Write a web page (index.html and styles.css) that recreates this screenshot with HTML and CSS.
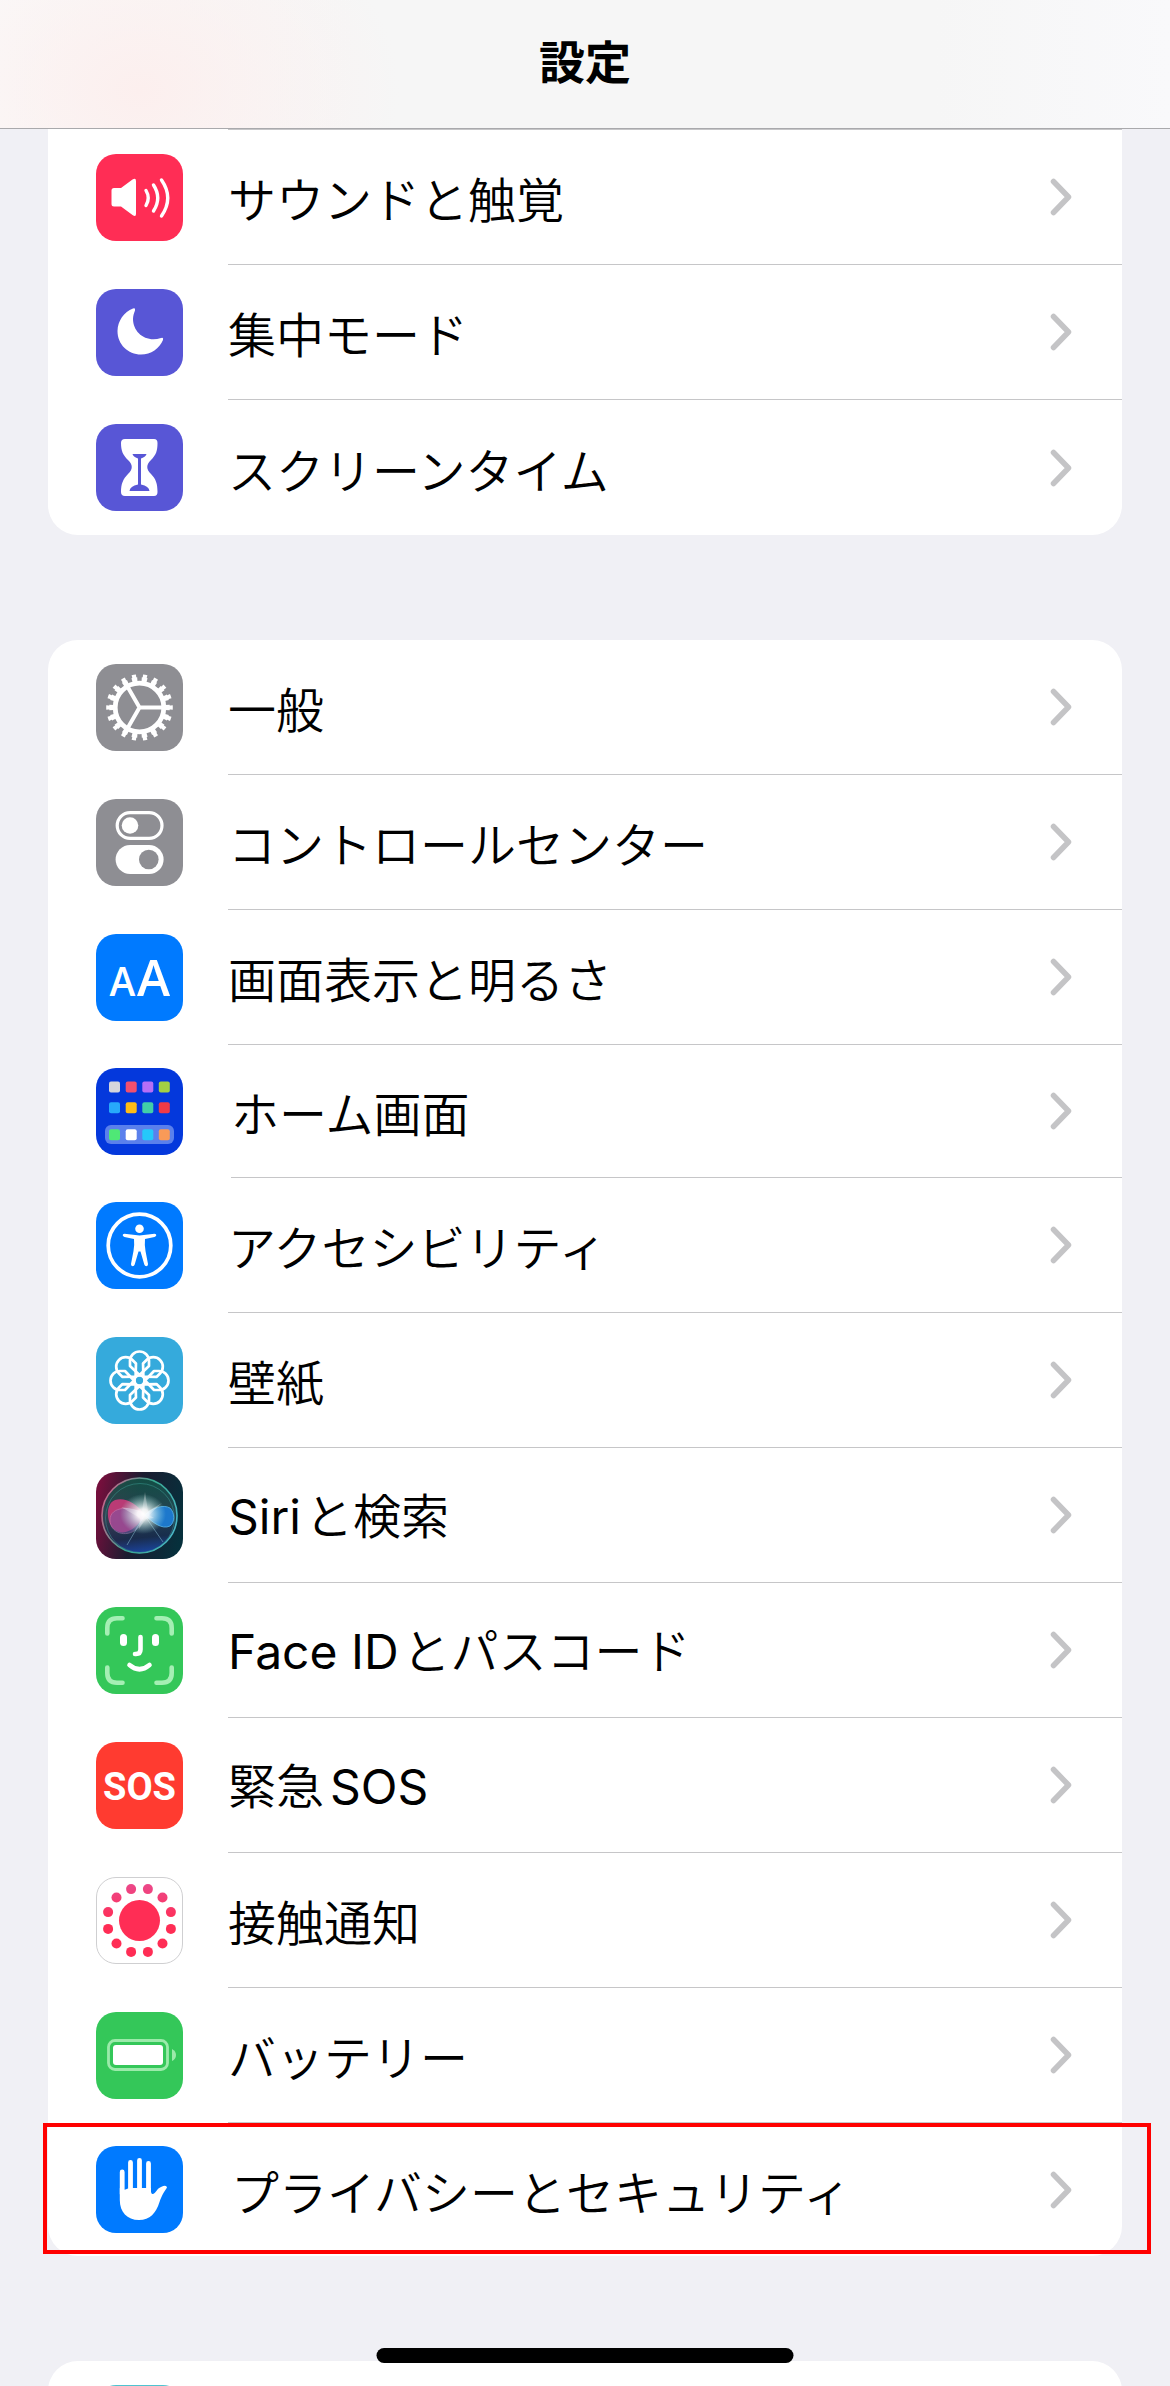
FILE: index.html
```html
<!DOCTYPE html>
<html lang="ja">
<head>
    <meta charset="UTF-8">
    <meta name="viewport" content="width=device-width, initial-scale=1.0">
    <title>設定</title>
    <link rel="stylesheet" href="styles.css">
</head>
<body>
    <svg class="defs" width="0" height="0" aria-hidden="true">
        <symbol id="chevron" viewBox="0 0 22 38">
            <path d="M3.500 3.500L18.500 19L3.500 34.500" fill="none" stroke="#c4c4c6" stroke-width="5.500" stroke-linecap="round" stroke-linejoin="round"/>
        </symbol>
    </svg>

    <header class="navbar">
        <h1>設定</h1>
    </header>

    <main>
        <ul class="group group-first">
            <li class="row-peek"></li>
            <li><a class="row" href="#">
                <svg class="icon" viewBox="0 0 87 87">
                    <rect width="87" height="87" rx="20" fill="#ff2d55"/>
                    <path d="M18 34H25L36.500 25.500Q40 23.500 40 27V60Q40 63.500 36.500 61L25 52.500H18Q15.500 52.500 15.500 50V36.500Q15.500 34 18 34Z" fill="#fff"/>
                    <path d="M50 36.500Q54.500 44 50 51.500M57.500 31Q66 44 57.500 57M65.500 26Q78 44 65.500 62" fill="none" stroke="#fff" stroke-width="3.400" stroke-linecap="round"/>
                </svg>
                <span class="cell"><span class="label">サウンドと触覚</span><svg class="chevron"><use href="#chevron"/></svg></span>
            </a></li>
            <li><a class="row" href="#">
                <svg class="icon" viewBox="0 0 87 87">
                    <rect width="87" height="87" rx="20" fill="#5856d6"/>
                    <path d="M37 19.500C28 23 21.500 32 21.500 42C21.500 55.500 32 65.500 45 65.500C55 65.500 63.500 59.500 67 51Q67.800 48 65 49C50 54 37 43.500 37 30C37 27 38 24 39 21.500Q39.600 18.500 37 19.500Z" fill="#fff"/>
                </svg>
                <span class="cell"><span class="label">集中モード</span><svg class="chevron"><use href="#chevron"/></svg></span>
            </a></li>
            <li><a class="row" href="#">
                <svg class="icon" viewBox="0 0 87 87">
                    <rect width="87" height="87" rx="20" fill="#5856d6"/>
                    <path d="M29 15H58Q61.500 15 61.500 19C61.500 27 60 31 55 36C50 41 50 45 55 50C60 55 61.500 60 61.500 68Q61.500 72 58 72H29Q25 72 25 68C25 60 27 55 32 50C37 45 37 41 32 36C27 31 25 27 25 19Q25 15 29 15Z" fill="#fff"/>
                    <path d="M36.500 30H50.500Q50 32.500 45 34.500V60.500Q53 62 53.500 67H33.500Q34 62 42 60.500V34.500Q37 32.500 36.500 30Z" fill="#5856d6"/>
                </svg>
                <span class="cell"><span class="label">スクリーンタイム</span><svg class="chevron"><use href="#chevron"/></svg></span>
            </a></li>
        </ul>

        <ul class="group">
            <li><a class="row" href="#">
                <svg class="icon" viewBox="0 0 87 87">
                    <rect width="87" height="87" rx="20" fill="#8e8e93"/>
                    <g fill="none" stroke="#fff">
                        <circle cx="43.500" cy="43.500" r="24.300" stroke-width="4.800"/>
                        <circle cx="43.500" cy="43.500" r="27.800" stroke-width="5" pathLength="180" stroke-dasharray="5.500 4.500" stroke-dashoffset="2.750"/>
                        <circle cx="43.500" cy="43.500" r="31" stroke-width="4.600" pathLength="180" stroke-dasharray="3.800 6.200" stroke-dashoffset="1.900"/>
                        <path d="M43.500 43.500H66M43.500 43.500L32 23.600M43.500 43.500L32 63.400" stroke-width="4"/>
                    </g>
                </svg>
                <span class="cell"><span class="label">一般</span><svg class="chevron"><use href="#chevron"/></svg></span>
            </a></li>
            <li><a class="row" href="#">
                <svg class="icon" viewBox="0 0 87 87">
                    <rect width="87" height="87" rx="20" fill="#8e8e93"/>
                    <rect x="21.200" y="13.600" width="44.800" height="25.800" rx="12.900" fill="none" stroke="#fff" stroke-width="3.200"/>
                    <circle cx="34" cy="26.500" r="8.300" fill="#fff"/>
                    <rect x="19.600" y="46" width="48" height="29" rx="14.500" fill="#fff"/>
                    <circle cx="52.800" cy="60.500" r="9.800" fill="#8e8e93"/>
                </svg>
                <span class="cell"><span class="label">コントロールセンター</span><svg class="chevron"><use href="#chevron"/></svg></span>
            </a></li>
            <li><a class="row" href="#">
                <svg class="icon" viewBox="0 0 87 87">
                    <rect width="87" height="87" rx="20" fill="#007aff"/>
                    <text class="icon-aa" x="26.500" y="62" font-size="39" text-anchor="middle">A</text>
                    <text class="icon-aa" x="57.500" y="62" font-size="50" text-anchor="middle">A</text>
                </svg>
                <span class="cell"><span class="label">画面表示と明るさ</span><svg class="chevron"><use href="#chevron"/></svg></span>
            </a></li>
            <li><a class="row row-compact" href="#">
                <svg class="icon" viewBox="0 0 87 87">
                    <rect width="87" height="87" rx="20" fill="#0438dc"/>
                    <rect x="9" y="57" width="69" height="19" rx="6" fill="#5a80ec"/>
                    <rect x="13" y="13.500" width="11" height="11" rx="2" fill="#d5d5dc"/>
                    <rect x="29.700" y="13.500" width="11" height="11" rx="2" fill="#f2506e"/>
                    <rect x="46.300" y="13.500" width="11" height="11" rx="2" fill="#b66ef7"/>
                    <rect x="62.800" y="13.500" width="11" height="11" rx="2" fill="#a3d043"/>
                    <rect x="13" y="34.300" width="11" height="11" rx="2" fill="#27a9fb"/>
                    <rect x="29.700" y="34.300" width="11" height="11" rx="2" fill="#ffbd17"/>
                    <rect x="46.300" y="34.300" width="11" height="11" rx="2" fill="#41cfa8"/>
                    <rect x="62.800" y="34.300" width="11" height="11" rx="2" fill="#f03a47"/>
                    <rect x="13" y="61.300" width="11" height="11" rx="2" fill="#4fe876"/>
                    <rect x="29.700" y="61.300" width="11" height="11" rx="2" fill="#fff"/>
                    <rect x="46.300" y="61.300" width="11" height="11" rx="2" fill="#25c8fa"/>
                    <rect x="62.800" y="61.300" width="11" height="11" rx="2" fill="#f99a58"/>
                </svg>
                <span class="cell"><span class="label">ホーム画面</span><svg class="chevron"><use href="#chevron"/></svg></span>
            </a></li>
            <li><a class="row" href="#">
                <svg class="icon" viewBox="0 0 87 87">
                    <rect width="87" height="87" rx="20" fill="#007aff"/>
                    <circle cx="43.500" cy="43.500" r="31.300" fill="none" stroke="#fff" stroke-width="3.700"/>
                    <circle cx="43.500" cy="26.800" r="4.300" fill="#fff"/>
                    <path d="M28.500 31.800L43.500 33.500L58.500 31.800Q60.500 31.800 60.300 33.300Q60 34.500 58.500 35L49 37Q48.400 43 49.500 49L52 62Q52.300 64 50.300 64.300Q48.800 64.300 48.300 62.500L44.500 49.500H42.500L38.700 62.500Q38.200 64.300 36.700 64.300Q34.700 64 35 62L37.500 49Q38.600 43 38 37L28.500 35Q27 34.500 26.700 33.300Q26.500 31.800 28.500 31.800Z" fill="#fff"/>
                </svg>
                <span class="cell"><span class="label">アクセシビリティ</span><svg class="chevron"><use href="#chevron"/></svg></span>
            </a></li>
            <li><a class="row" href="#">
                <svg class="icon" viewBox="0 0 87 87">
                    <rect width="87" height="87" rx="20" fill="#35aadc"/>
                    <g fill="none" stroke="#fff" stroke-width="2.700" stroke-linejoin="round">
                        <path id="petal" d="M43.500 38L34 29V24A9.500 9.500 0 0 1 53 24V29Z"/>
                        <use href="#petal" transform="rotate(45 43.500 43.500)"/>
                        <use href="#petal" transform="rotate(90 43.500 43.500)"/>
                        <use href="#petal" transform="rotate(135 43.500 43.500)"/>
                        <use href="#petal" transform="rotate(180 43.500 43.500)"/>
                        <use href="#petal" transform="rotate(225 43.500 43.500)"/>
                        <use href="#petal" transform="rotate(270 43.500 43.500)"/>
                        <use href="#petal" transform="rotate(315 43.500 43.500)"/>
                        <circle cx="43.500" cy="43.500" r="5"/>
                    </g>
                </svg>
                <span class="cell"><span class="label">壁紙</span><svg class="chevron"><use href="#chevron"/></svg></span>
            </a></li>
            <li><a class="row" href="#">
                <svg class="icon" viewBox="0 0 87 87">
                    <defs>
                        <linearGradient id="siri-bg" x1="0" y1=".4" x2="1" y2=".6">
                            <stop offset="0" stop-color="#740f3c"/>
                            <stop offset=".45" stop-color="#1b1c30"/>
                            <stop offset="1" stop-color="#06303c"/>
                        </linearGradient>
                        <linearGradient id="siri-orb" x1=".4" y1="0" x2=".5" y2="1">
                            <stop offset="0" stop-color="#0f5a48"/>
                            <stop offset=".5" stop-color="#2a4a58"/>
                            <stop offset=".8" stop-color="#1a2f52"/>
                            <stop offset="1" stop-color="#1c4cb8"/>
                        </linearGradient>
                        <linearGradient id="siri-ring" x1="0" y1=".3" x2="1" y2=".7">
                            <stop offset="0" stop-color="#c8648a"/>
                            <stop offset=".5" stop-color="#38a890"/>
                            <stop offset="1" stop-color="#4ab8c8"/>
                        </linearGradient>
                        <radialGradient id="siri-glow">
                            <stop offset="0" stop-color="#fff"/>
                            <stop offset=".25" stop-color="#fff" stop-opacity=".9"/>
                            <stop offset="1" stop-color="#9fe8e0" stop-opacity="0"/>
                        </radialGradient>
                    </defs>
                    <rect width="87" height="87" rx="20" fill="url(#siri-bg)"/>
                    <circle cx="43.500" cy="43.500" r="37.500" fill="url(#siri-orb)" fill-opacity=".8" stroke="url(#siri-ring)" stroke-width="1.600"/>
                    <circle cx="44" cy="46" r="34.500" fill="none" stroke="#3da098" stroke-width=".8" opacity=".6"/>
                    <path d="M49 43C40 30 28 25 19 28C9 32 10 52 19 58C29 65 41 56 49 43Z" fill="#d43a7c" opacity=".85"/>
                    <path d="M49 43C36 33 14 34 14 48C14 65 42 69 49 43Z" fill="#7658a8" stroke="#c99bd0" stroke-width=".8" opacity=".5"/>
                    <path d="M49 43C56 36 67 32 74 36C79 41 79 50 74 54C66 58 56 50 49 43Z" fill="#1d78cc" stroke="#58b8f0" stroke-width=".8"/>
                    <path d="M48 44L31 73M49 44L67 70" stroke="#9bd4ea" stroke-width="1" opacity=".45"/>
                    <ellipse cx="47" cy="42" rx="23" ry="20" fill="url(#siri-glow)"/>
                    <path d="M25 35L46 39L49 20L52 39L66 31L53 43L58 46L50 47L43 57L44 46Z" fill="#fff" opacity=".3"/>
                </svg>
                <span class="cell"><span class="label"><span class="latin latin-start">Siri</span>と検索</span><svg class="chevron"><use href="#chevron"/></svg></span>
            </a></li>
            <li><a class="row" href="#">
                <svg class="icon" viewBox="0 0 87 87">
                    <rect width="87" height="87" rx="20" fill="#34c759"/>
                    <path d="M26.500 11.300H21Q11.300 11.300 11.300 21V26.500M60.500 11.300H66Q75.700 11.300 75.700 21V26.500M26.500 75.700H21Q11.300 75.700 11.300 66V60.500M60.500 75.700H66Q75.700 75.700 75.700 66V60.500" fill="none" stroke="#a5efb4" stroke-width="4.600" stroke-linecap="round"/>
                    <rect x="24" y="27" width="7" height="12" rx="3.500" fill="#fff"/>
                    <rect x="56" y="27" width="7" height="12" rx="3.500" fill="#fff"/>
                    <path d="M44.500 30V42.500Q44.500 47 40 47H39M33.500 58Q43.500 66.500 53.500 58" fill="none" stroke="#fff" stroke-width="4.600" stroke-linecap="round"/>
                </svg>
                <span class="cell"><span class="label"><span class="latin latin-start">Face ID</span>とパスコード</span><svg class="chevron"><use href="#chevron"/></svg></span>
            </a></li>
            <li><a class="row" href="#">
                <svg class="icon" viewBox="0 0 87 87">
                    <rect width="87" height="87" rx="20" fill="#ff3b30"/>
                    <text class="icon-sos" x="43.500" y="57.500" font-size="38" text-anchor="middle">SOS</text>
                </svg>
                <span class="cell"><span class="label">緊急<span class="latin latin-end">SOS</span></span><svg class="chevron"><use href="#chevron"/></svg></span>
            </a></li>
            <li><a class="row" href="#">
                <svg class="icon" viewBox="0 0 87 87">
                    <defs>
                        <linearGradient id="exposure" gradientUnits="userSpaceOnUse" x1="0" y1="8" x2="0" y2="44">
                            <stop offset="0" stop-color="#ec4889"/>
                            <stop offset="1" stop-color="#ff2d55"/>
                        </linearGradient>
                    </defs>
                    <rect x=".5" y=".5" width="86" height="86" rx="19.500" fill="#fff" stroke="#cfcfd1"/>
                    <circle cx="43.500" cy="43.500" r="20.500" fill="#ff2d55"/>
                    <g fill="url(#exposure)">
                        <circle cx="51.900" cy="12.100" r="5"/>
                        <circle cx="66.500" cy="20.500" r="5"/>
                        <circle cx="74.900" cy="35.100" r="5"/>
                        <circle cx="74.900" cy="51.900" r="5"/>
                        <circle cx="66.500" cy="66.500" r="5"/>
                        <circle cx="51.900" cy="74.900" r="5"/>
                        <circle cx="35.100" cy="74.900" r="5"/>
                        <circle cx="20.500" cy="66.500" r="5"/>
                        <circle cx="12.100" cy="51.900" r="5"/>
                        <circle cx="12.100" cy="35.100" r="5"/>
                        <circle cx="20.500" cy="20.500" r="5"/>
                        <circle cx="35.100" cy="12.100" r="5"/>
                    </g>
                </svg>
                <span class="cell"><span class="label">接触通知</span><svg class="chevron"><use href="#chevron"/></svg></span>
            </a></li>
            <li><a class="row" href="#">
                <svg class="icon" viewBox="0 0 87 87">
                    <rect width="87" height="87" rx="20" fill="#34c759"/>
                    <rect x="12.500" y="28.500" width="59" height="29" rx="6.500" fill="none" stroke="#9beaaa" stroke-width="2.800"/>
                    <rect x="17" y="33" width="50" height="20" rx="3" fill="#fff"/>
                    <path d="M76 37Q80 39 80 43T76 49Z" fill="#9beaaa"/>
                </svg>
                <span class="cell"><span class="label">バッテリー</span><svg class="chevron"><use href="#chevron"/></svg></span>
            </a></li>
            <li><a class="row row-compact row-marked" href="#">
                <svg class="icon" viewBox="0 0 87 87">
                    <rect width="87" height="87" rx="20" fill="#007aff"/>
                    <path d="M26.200 26V48M34.500 16.500V48M43.500 14.500V48M52.500 17.500V48" stroke="#fff" stroke-width="4.800" stroke-linecap="round"/>
                    <path d="M23.800 42C25 45 29 44 32 42.500L37 42H50L55 42Q54.500 48.500 57 48C60 47 61 42.500 65 41Q70.500 38.500 71 41.500C68 46 66 49 63.500 56C60 67 54 74 43 74C31 74 23.800 66 23.800 54Z" fill="#fff"/>
                </svg>
                <span class="cell"><span class="label">プライバシーとセキュリティ</span><svg class="chevron"><use href="#chevron"/></svg></span>
            </a></li>
        </ul>

        <ul class="group">
            <li><a class="row" href="#">
                <svg class="icon" viewBox="0 0 87 87">
                    <rect width="87" height="87" rx="20" fill="#4fc3d0"/>
                </svg>
            </a></li>
        </ul>
    </main>

    <div class="home-indicator"></div>
</body>
</html>
```

FILE: styles.css
```css
* {
    box-sizing: border-box;
}
body {
    margin: 0;
    height: 100vh;
    overflow: hidden;
    background-color: #f0f0f5;
    color: #000;
    font-family: "Noto Sans CJK JP", sans-serif;
}
.defs {
    position: absolute;
}
.navbar {
    display: flex;
    align-items: center;
    justify-content: center;
    height: 129px;
    padding-bottom: 10px;
    border-bottom: 1px solid #a9a9ac;
    background: radial-gradient(ellipse 260px 200px at 140px 90px, #fcefee, rgba(247, 247, 247, 0)), linear-gradient(to right, #fafafa, #f6f6f6 30%, #f6f6f6 80%, #f9f9fb);
}
h1 {
    margin: 0;
    font-size: 46px;
    line-height: 68px;
    font-weight: 700;
}
.group {
    list-style: none;
    margin: 0 48px 105px;
    padding: 0;
    background-color: #fff;
    border-radius: 30px;
}
.group-first {
    border-radius: 0 0 30px 30px;
}
.row-peek {
    height: 1px;
    margin-left: 180px;
    background-color: #c6c6c8;
}
.row {
    display: flex;
    align-items: center;
    gap: 45px;
    height: 135px;
    padding-left: 48px;
    color: inherit;
    text-decoration: none;
}
.row-compact {
    position: relative;
    gap: 48px;
    height: 133px;
}
.icon {
    flex: none;
    width: 87px;
    height: 87px;
}
.cell {
    flex: 1;
    display: flex;
    align-items: center;
    justify-content: space-between;
    height: 100%;
    padding-right: 50px;
    border-bottom: 1px solid #c6c6c8;
}
li:last-child .cell {
    border-bottom: none;
}
.label {
    font-size: 48px;
    line-height: 70px;
    font-weight: 350;
    white-space: nowrap;
}
.latin {
    font-family: Inter, sans-serif;
    font-weight: 400;
}
.latin-start {
    margin-right: 4px;
}
.latin-end {
    margin-left: 6px;
}
.chevron {
    flex: none;
    width: 22px;
    height: 38px;
}
.icon-aa {
    fill: #fff;
    font-family: "Open Sans", sans-serif;
    font-weight: 600;
}
.icon-sos {
    fill: #fff;
    font-family: Roboto, sans-serif;
    font-weight: 700;
}
/* red frame around the privacy row */
.row-marked::after {
    content: "";
    position: absolute;
    top: 0;
    right: -29px;
    bottom: 2px;
    left: -5px;
    border: 4px solid #ff0000;
}
.home-indicator {
    position: fixed;
    left: 50%;
    bottom: 23px;
    width: 417px;
    height: 15px;
    border-radius: 8px;
    background-color: #000;
    transform: translateX(-50%);
}
```
